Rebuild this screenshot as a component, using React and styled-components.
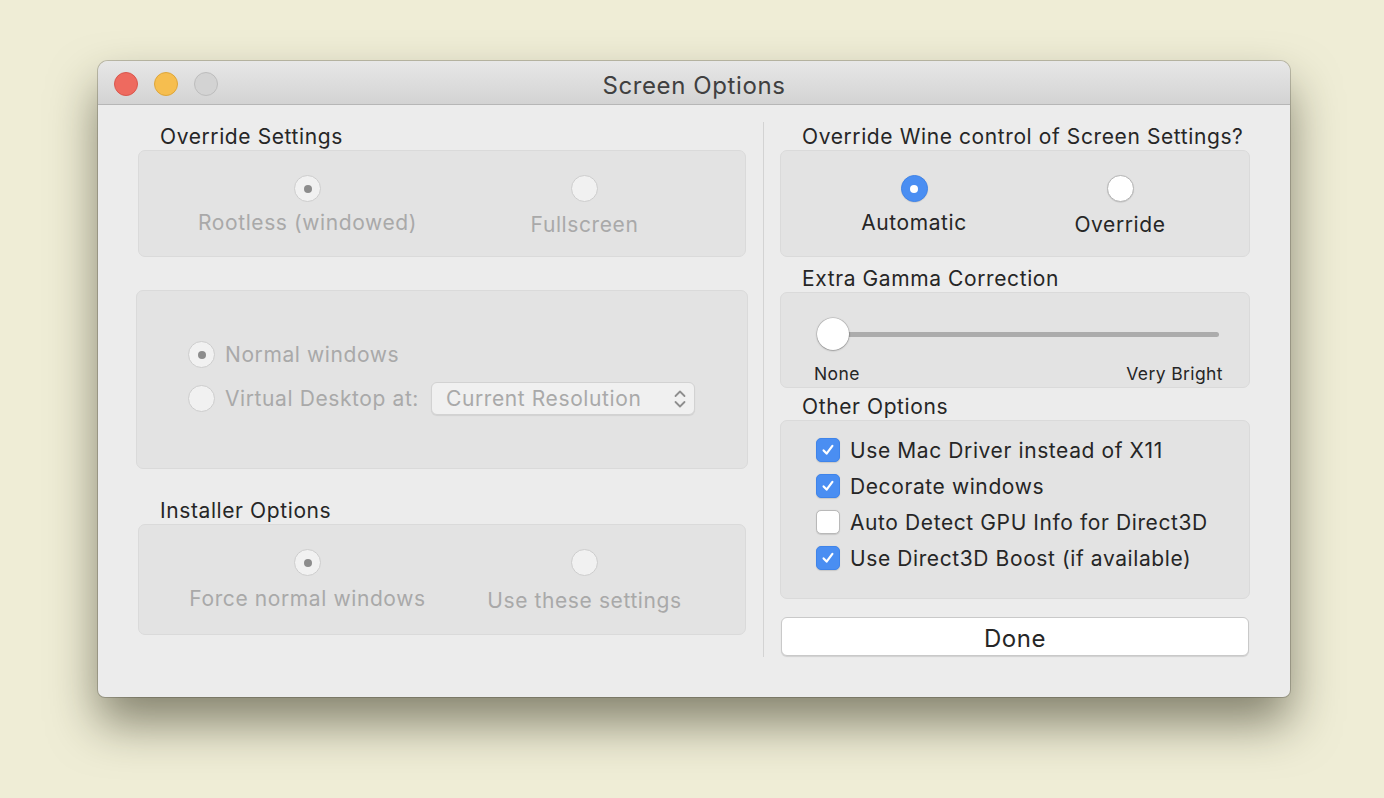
import React from "react";
import styled, { createGlobalStyle } from "styled-components";

const Global = createGlobalStyle`
  html, body { margin: 0; padding: 0; }
  body {
    background: #efedd6;
    font-family: Inter, "Noto Sans", "Liberation Sans", sans-serif;
    -webkit-font-smoothing: antialiased;
  }
`;

const Page = styled.div`
  width: 1384px;
  height: 798px;
  box-sizing: border-box;
  padding: 61px 0 0 98px;
  overflow: hidden;
`;

const Window = styled.div`
  width: 1192px;
  height: 636px;
  background: #ececec;
  border-radius: 10px 10px 7px 7px;
  box-shadow: 0 26px 48px rgba(45, 43, 25, 0.55), 0 0 0 1px rgba(0, 0, 0, 0.2);
  display: flex;
  flex-direction: column;
  overflow: hidden;
`;

const TitleBar = styled.div`
  height: 43px;
  flex: none;
  position: relative;
  display: flex;
  align-items: center;
  justify-content: center;
  background: linear-gradient(#e7e7e7, #d3d3d3);
  border-bottom: 1px solid #b6b6b6;
`;

const Lights = styled.div`
  position: absolute;
  left: 16px;
  top: 11px;
  display: flex;
  gap: 16px;
`;

const Light = styled.span`
  width: 22px;
  height: 22px;
  border-radius: 50%;
  background: ${(p) => p.$c};
  border: 1px solid ${(p) => p.$b};
`;

const Title = styled.div`
  font-size: 24px;
  letter-spacing: 0.6px;
  color: #404040;
  margin-top: 5px;
`;

const Body = styled.div`
  flex: 1;
  display: grid;
  grid-template-columns: 608px 1px 469px;
  column-gap: 17px;
  padding: 0 41px 0 40px;
  font-size: 21px;
  letter-spacing: 0.6px;
`;

const Column = styled.div`
  display: flex;
  flex-direction: column;
  padding-top: 19px;
`;

const RightColumn = styled(Column)`
  margin-left: -1px;
`;

const Divider = styled.div`
  background: #d3d3d3;
  margin: 17px 0 40px;
`;

const SectionLabel = styled.div`
  height: 24px;
  line-height: 26px;
  color: #262626;
  padding-left: 22px;
  white-space: nowrap;
  margin-top: ${(p) => p.$mt || 0}px;
  margin-bottom: 2px;
`;

const Group = styled.div`
  box-sizing: border-box;
  height: ${(p) => p.$h}px;
  background: #e3e3e3;
  border: 1px solid #dadada;
  border-radius: 7px;
  margin-top: ${(p) => p.$mt || 0}px;
`;

const ChoiceGroup = styled(Group)`
  display: grid;
  grid-template-columns: repeat(2, ${(p) => p.$col}px);
  padding: 24px 0 0 30px;
  align-items: start;
`;

const Choice = styled.div`
  display: flex;
  flex-direction: column;
  align-items: center;
`;

const Radio = styled.span`
  box-sizing: border-box;
  width: 27px;
  height: 27px;
  border-radius: 50%;
  flex: none;
  display: flex;
  align-items: center;
  justify-content: center;
  background: ${(p) => (p.$on && !p.$dis ? "#4a8ef2" : p.$dis ? "#f1f1f1" : "#ffffff")};
  border: 1px solid ${(p) => (p.$on && !p.$dis ? "#3f84ea" : p.$dis ? "#cdcdcd" : "#b5b5b5")};
  box-shadow: ${(p) => (p.$dis ? "none" : "0 0.5px 1px rgba(0,0,0,0.15)")};
  &::after {
    content: "";
    display: ${(p) => (p.$on ? "block" : "none")};
    width: 8px;
    height: 8px;
    border-radius: 50%;
    background: ${(p) => (p.$dis ? "#8c8c8c" : "#ffffff")};
  }
`;

const ChoiceText = styled.span`
  line-height: 24px;
  margin-top: ${(p) => p.$gap}px;
  color: ${(p) => (p.$dis ? "#a9a9a9" : "#262626")};
  white-space: nowrap;
`;

const DesktopGroup = styled(Group)`
  margin: 33px -2px 0;
  padding: 47px 0 0 51px;
  display: flex;
  flex-direction: column;
  gap: 11px;
`;

const Row = styled.div`
  height: 33px;
  display: flex;
  align-items: center;
`;

const RowText = styled.span`
  color: #a9a9a9;
  margin-left: 10px;
  white-space: nowrap;
`;

const Select = styled.div`
  box-sizing: border-box;
  width: 264px;
  height: 33px;
  margin-left: 12px;
  background: #f0f0f0;
  border: 1px solid #d2d2d2;
  border-radius: 6px;
  box-shadow: 0 1px 1px rgba(0, 0, 0, 0.08);
  display: flex;
  align-items: center;
  justify-content: space-between;
  padding: 0 7px 0 14px;
  color: #a9a9a9;
  white-space: nowrap;
`;

const SliderGroup = styled(Group)`
  padding: 0 26px 0 33px;
  display: flex;
  flex-direction: column;
`;

const Track = styled.div`
  position: relative;
  margin: 39px 4px 0 19px;
  height: 5px;
  border-radius: 3px;
  background: #acacac;
  flex: none;
`;

const Thumb = styled.span`
  position: absolute;
  left: -16px;
  top: -14px;
  width: 32px;
  height: 32px;
  border-radius: 50%;
  background: #ffffff;
  box-shadow: 0 0.5px 2px rgba(0, 0, 0, 0.4), 0 0 0 0.5px rgba(0, 0, 0, 0.15);
`;

const SliderLabels = styled.div`
  display: flex;
  justify-content: space-between;
  margin-top: 27px;
  font-size: 17.5px;
  letter-spacing: 0.4px;
  line-height: 20px;
  color: #262626;
`;

const CheckGroup = styled(Group)`
  padding: 11px 0 0 35px;
  display: flex;
  flex-direction: column;
`;

const CheckRow = styled.div`
  height: 36px;
  display: flex;
  align-items: center;
  gap: 10px;
  color: #262626;
  white-space: nowrap;
`;

const Box = styled.span`
  box-sizing: border-box;
  width: 24px;
  height: 24px;
  border-radius: 5px;
  flex: none;
  display: flex;
  align-items: center;
  justify-content: center;
  background: ${(p) => (p.$on ? "#4a8ef2" : "#ffffff")};
  border: 1px solid ${(p) => (p.$on ? "#3f84ea" : "#b9b9b9")};
  box-shadow: 0 0.5px 1px rgba(0, 0, 0, 0.12);
`;

const DoneButton = styled.button`
  margin: 18px 1px 0;
  height: 39px;
  background: #ffffff;
  border: 1px solid #c9c9c9;
  border-radius: 6px;
  box-shadow: 0 1px 1px rgba(0, 0, 0, 0.12);
  font-family: inherit;
  font-size: 24px;
  letter-spacing: 0.5px;
  color: #262626;
  padding: 3px 0 0;
`;

const Check = () => (
  <svg width="14" height="14" viewBox="0 0 14 14">
    <path d="M2.6 7.4 L5.6 10.6 L11.4 2.8" fill="none" stroke="#fff" strokeWidth="2.2" strokeLinecap="round" strokeLinejoin="round" />
  </svg>
);

const Chevrons = () => (
  <svg width="14" height="22" viewBox="0 0 14 22">
    <path d="M2.5 8 L7 3.5 L11.5 8 M2.5 14 L7 18.5 L11.5 14" fill="none" stroke="#8e8e8e" strokeWidth="1.8" strokeLinecap="round" strokeLinejoin="round" />
  </svg>
);

const Pair = ({ col, items, dis, h, mt }) => (
  <ChoiceGroup $col={col} $h={h} $mt={mt}>
    {items.map((it) => (
      <Choice key={it.label}>
        <Radio $on={it.on} $dis={dis} />
        <ChoiceText $dis={dis} $gap={it.gap}>{it.label}</ChoiceText>
      </Choice>
    ))}
  </ChoiceGroup>
);

export default function App() {
  return (
    <Page>
      <Global />
      <Window>
        <TitleBar>
          <Lights>
            <Light $c="#ee6a5f" $b="#d9574d" />
            <Light $c="#f6be4f" $b="#dea63a" />
            <Light $c="#d3d3d3" $b="#bdbdbd" />
          </Lights>
          <Title>Screen Options</Title>
        </TitleBar>
        <Body>
          <Column>
            <SectionLabel>Override Settings</SectionLabel>
            <Pair
              dis
              col={277}
              h={107}
              items={[
                { label: "Rootless (windowed)", on: true, gap: 9 },
                { label: "Fullscreen", gap: 11 },
              ]}
            />
            <DesktopGroup $h={179}>
              <Row>
                <Radio $on $dis />
                <RowText>Normal windows</RowText>
              </Row>
              <Row>
                <Radio $dis />
                <RowText>Virtual Desktop at:</RowText>
                <Select>
                  <span>Current Resolution</span>
                  <Chevrons />
                </Select>
              </Row>
            </DesktopGroup>
            <SectionLabel $mt={29}>Installer Options</SectionLabel>
            <Pair
              dis
              col={277}
              h={111}
              items={[
                { label: "Force normal windows", on: true, gap: 11 },
                { label: "Use these settings", gap: 13 },
              ]}
            />
          </Column>
          <Divider />
          <RightColumn>
            <SectionLabel>Override Wine control of Screen Settings?</SectionLabel>
            <Pair
              col={206}
              h={107}
              items={[
                { label: "Automatic", on: true, gap: 9 },
                { label: "Override", gap: 11 },
              ]}
            />
            <SectionLabel $mt={9}>Extra Gamma Correction</SectionLabel>
            <SliderGroup $h={96}>
              <Track>
                <Thumb />
              </Track>
              <SliderLabels>
                <span>None</span>
                <span>Very Bright</span>
              </SliderLabels>
            </SliderGroup>
            <SectionLabel $mt={6}>Other Options</SectionLabel>
            <CheckGroup $h={179}>
              <CheckRow><Box $on><Check /></Box>Use Mac Driver instead of X11</CheckRow>
              <CheckRow><Box $on><Check /></Box>Decorate windows</CheckRow>
              <CheckRow><Box />Auto Detect GPU Info for Direct3D</CheckRow>
              <CheckRow><Box $on><Check /></Box>Use Direct3D Boost (if available)</CheckRow>
            </CheckGroup>
            <DoneButton>Done</DoneButton>
          </RightColumn>
        </Body>
      </Window>
    </Page>
  );
}
